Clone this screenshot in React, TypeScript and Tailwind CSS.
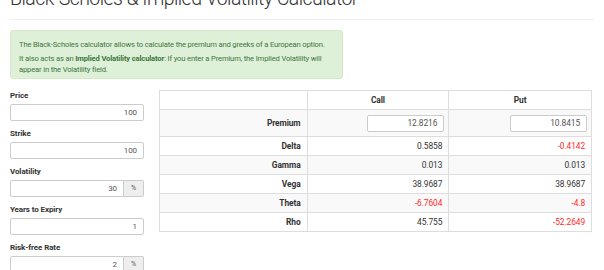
import type { ReactNode } from 'react'

// Field in the left-hand form column
function Field({ label, value, addon }: { label: string; value: string; addon?: string }) {
  return (
    <div className="mb-[8px]">
      <label className="block text-[8px] font-bold text-[#333] leading-[10px] mb-[3px]">{label}</label>
      <div className="flex h-[17px]">
        <div
          className={`flex-1 flex items-center justify-end border border-[#ccc] bg-white pr-[6px] text-[8px] text-[#555] ${
            addon ? 'rounded-l-[2px]' : 'rounded-[2px]'
          }`}
        >
          {value}
        </div>
        {addon && (
          <div className="w-[20px] flex items-center justify-center border border-l-0 border-[#ccc] bg-[#eee] rounded-r-[2px] text-[7px] text-[#555]">
            {addon}
          </div>
        )}
      </div>
    </div>
  )
}

type Row = { name: string; call: string; put: string; striped?: boolean }

const rows: Row[] = [
  { name: 'Delta', call: '0.5858', put: '-0.4142' },
  { name: 'Gamma', call: '0.013', put: '0.013', striped: true },
  { name: 'Vega', call: '38.9687', put: '38.9687' },
  { name: 'Theta', call: '-6.7604', put: '-4.8', striped: true },
  { name: 'Rho', call: '45.755', put: '-52.2649' },
]

function Cell({ children, className = '' }: { children: ReactNode; className?: string }) {
  return <td className={`border border-[#ddd] px-[6px] leading-none ${className}`}>{children}</td>
}

function Num({ v }: { v: string }) {
  return <span className={v.startsWith('-') ? 'text-[#ff2b2b]' : 'text-[#333]'}>{v}</span>
}

export default function App() {
  return (
    <div className="w-[604px] h-[270px] overflow-hidden bg-white px-[10px] font-['Roboto',sans-serif] text-[#333] tracking-[-0.1px]">
      <h1 className="-mt-[13px] text-[19.5px] leading-[24px] font-light text-[#333] whitespace-nowrap tracking-[-0.55px]">
        Black-Scholes &amp; Implied Volatility Calculator
      </h1>
      <hr className="mt-[8px] border-t border-[#eee]" />

      <div className="mt-[10px] w-[333px] h-[49px] bg-[#dff0d8] border border-[#d6e9c6] rounded-[3px] px-[8px] pt-[8px] text-[7.6px] leading-[11px] text-[#3c763d] tracking-[-0.15px]">
        <p className="mb-[3px]">The Black-Scholes calculator allows to calculate the premium and greeks of a European option.</p>
        <p>
          It also acts as an <b>Implied Volatility calculator</b>: If you enter a Premium, the Implied Volatility will
          appear in the Volatility field.
        </p>
      </div>

      <div className="mt-[10px] flex gap-[15px]">
        <div className="w-[134px] shrink-0 pt-[2px]">
          <Field label="Price" value="100" />
          <Field label="Strike" value="100" />
          <Field label="Volatility" value="30" addon="%" />
          <Field label="Years to Expiry" value="1" />
          <Field label="Risk-free Rate" value="2" addon="%" />
        </div>

        <table className="w-[433px] h-fit border-collapse text-[8.4px] mt-[1px]">
          <colgroup>
            <col className="w-[148px]" />
            <col className="w-[142px]" />
            <col className="w-[143px]" />
          </colgroup>
          <thead>
            <tr className="h-[19px]">
              <th className="border border-[#ddd]" />
              <th className="border border-[#ddd] font-bold text-center">Call</th>
              <th className="border border-[#ddd] font-bold text-center">Put</th>
            </tr>
          </thead>
          <tbody>
            <tr className="h-[27px] bg-[#f9f9f9]">
              <Cell className="text-right font-bold">Premium</Cell>
              <Cell className="pr-[4px]">
                <div className="ml-auto w-[77px] h-[17px] flex items-center justify-end border border-[#ccc] rounded-[2px] bg-white pr-[6px] text-[#555]">
                  12.8216
                </div>
              </Cell>
              <Cell className="pr-[4px]">
                <div className="ml-auto w-[77px] h-[17px] flex items-center justify-end border border-[#ccc] rounded-[2px] bg-white pr-[6px] text-[#555]">
                  10.8415
                </div>
              </Cell>
            </tr>
            {rows.map(r => (
              <tr key={r.name} className={`h-[19px] ${r.striped ? 'bg-[#f9f9f9]' : ''}`}>
                <Cell className="text-right font-bold">{r.name}</Cell>
                <Cell className="text-right">
                  <Num v={r.call} />
                </Cell>
                <Cell className="text-right">
                  <Num v={r.put} />
                </Cell>
              </tr>
            ))}
          </tbody>
        </table>
      </div>
    </div>
  )
}
